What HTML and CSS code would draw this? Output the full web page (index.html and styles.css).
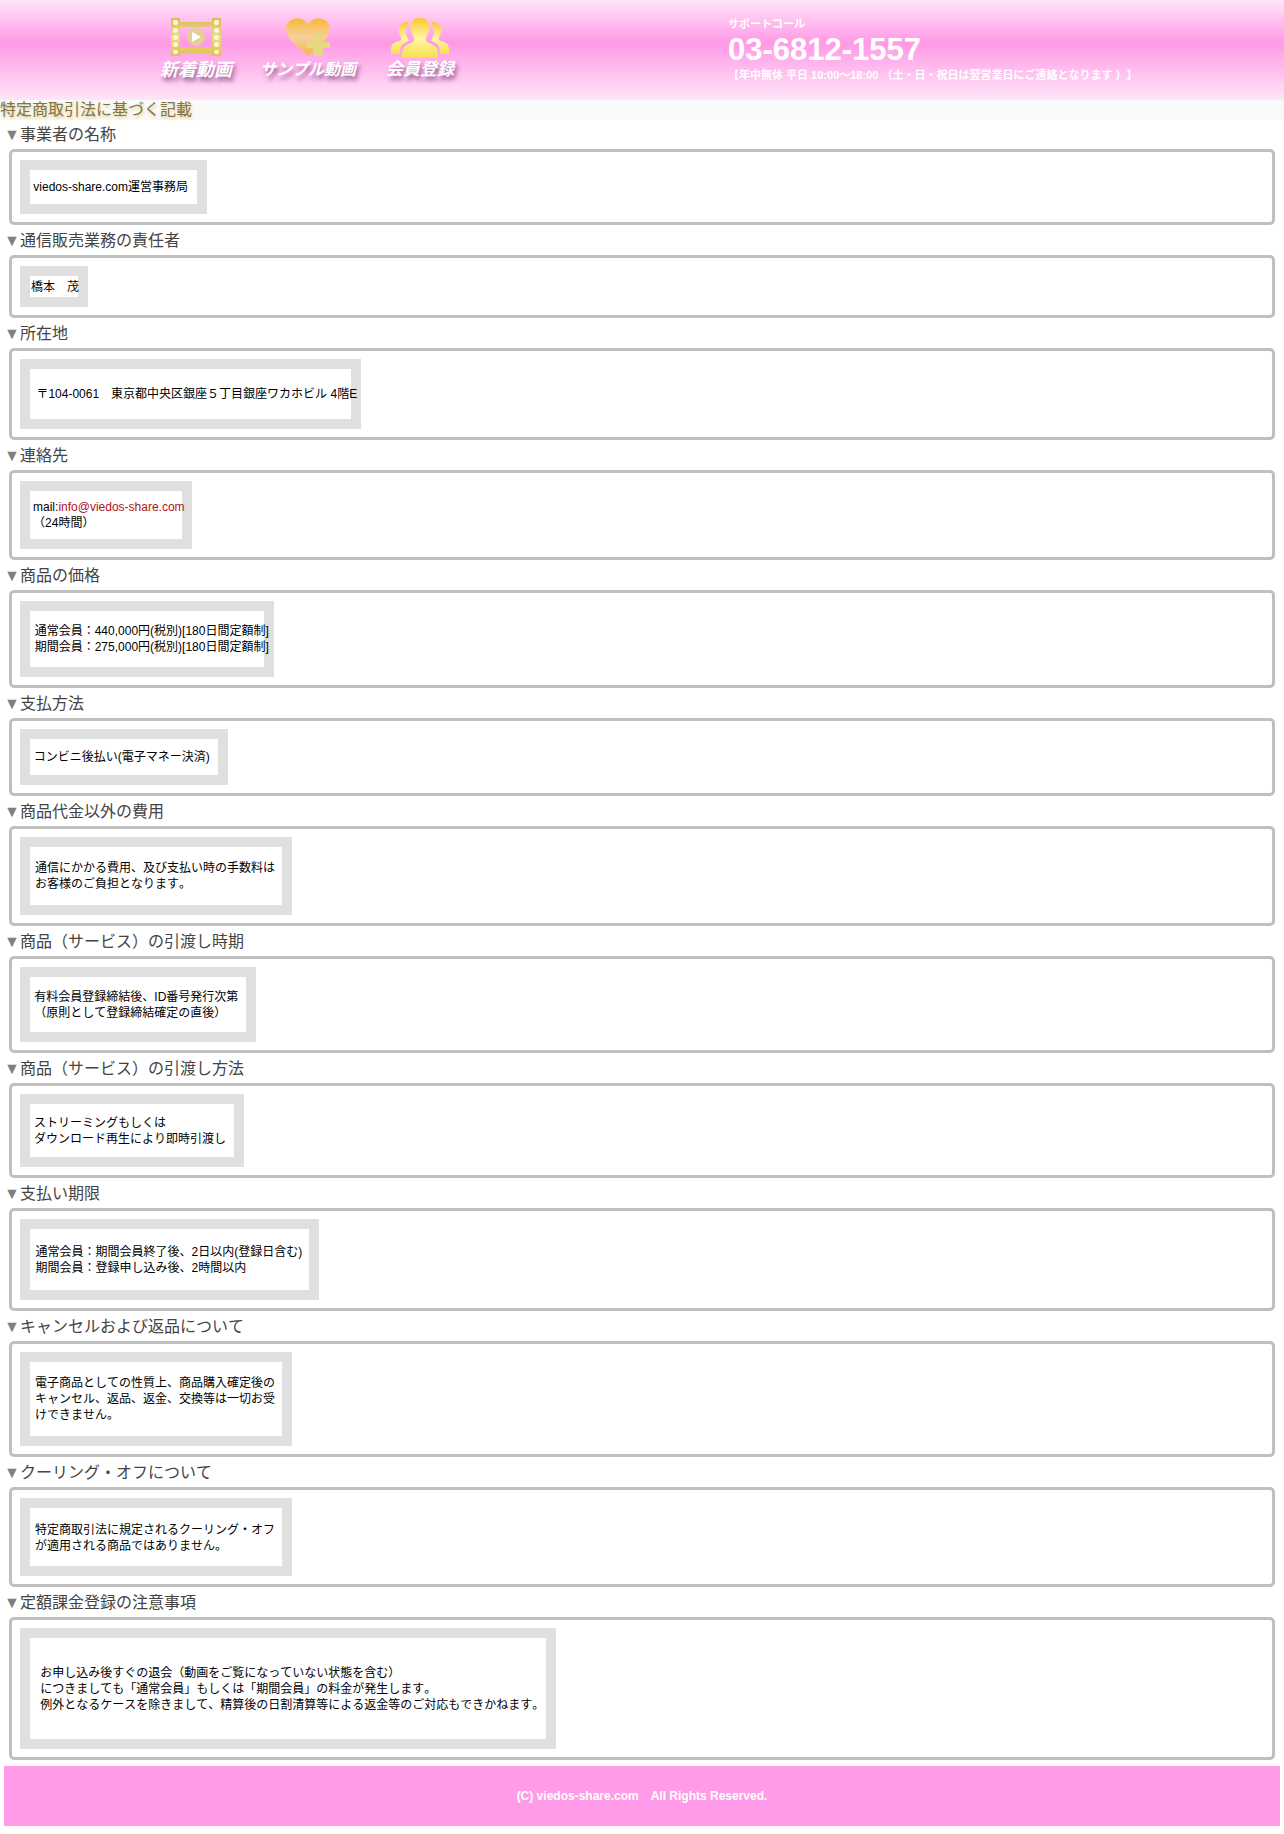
FILE: index.html
```
<!DOCTYPE html>
<html lang="ja">
<head>
  <meta charset="UTF-8">
  <meta name="viewport" content="width=device-width, initial-scale=1.0">
  <title>特定商取引法に基づく記載</title>
  <link rel="stylesheet" href="styles.css">
</head>
<body>
  <header class="header">
    <div class="header-inner">
      <nav class="nav">
        <a href="#" class="nav-new">
          <svg width="50" height="40" viewBox="0 0 50 40">
            <defs>
              <linearGradient id="film" x1="0" y1="0" x2="0" y2="1">
                <stop offset="0" stop-color="#ddb95c"/>
                <stop offset="0.5" stop-color="#eadb8c"/>
                <stop offset="1" stop-color="#e2bf4e"/>
              </linearGradient>
            </defs>
            <path fill="url(#film)" fill-rule="evenodd" d="M0 0h9v4h32V0h9v38h-9v-3H9v3H0zM9 9v21h32V9z"/>
            <g fill="#fff6cf">
              <rect x="2" y="2" width="5" height="5" rx="2"/>
              <rect x="2" y="10" width="5" height="5" rx="2"/>
              <rect x="2" y="17" width="5" height="5" rx="2"/>
              <rect x="2" y="24" width="5" height="5" rx="2"/>
              <rect x="2" y="32" width="5" height="4" rx="2"/>
              <rect x="43" y="2" width="5" height="5" rx="2"/>
              <rect x="43" y="10" width="5" height="5" rx="2"/>
              <rect x="43" y="17" width="5" height="5" rx="2"/>
              <rect x="43" y="24" width="5" height="5" rx="2"/>
              <rect x="43" y="32" width="5" height="4" rx="2"/>
            </g>
            <circle cx="25" cy="19" r="9" fill="#e5cf96"/>
            <path fill="#fff" d="M21 14l9 5-9 5z"/>
          </svg>
          <span>新着動画</span>
        </a>
        <a href="#" class="nav-sample">
          <svg width="44" height="40" viewBox="0 0 44 40">
            <defs>
              <linearGradient id="heart" x1="0" y1="0" x2="0" y2="1">
                <stop offset="0" stop-color="#f9b934"/>
                <stop offset="0.5" stop-color="#f5cfa0"/>
                <stop offset="1" stop-color="#f4b83c"/>
              </linearGradient>
            </defs>
            <path fill="url(#heart)" d="M22 38C17 31 0 23 0 11 0 0 15-4 22 6 29-4 44 0 44 11c0 12-17 20-22 27z"/>
            <path fill="#e8d781" d="M28 24a5 5 0 1 1 8 0h8v6h-7v8h-9v-8h-7v-6z"/>
          </svg>
          <span>サンプル動画</span>
        </a>
        <a href="#" class="nav-join">
          <svg width="58" height="40" viewBox="0 0 58 40">
            <defs>
              <linearGradient id="people" x1="0" y1="0" x2="0" y2="1">
                <stop offset="0" stop-color="#f7c82c"/>
                <stop offset="0.5" stop-color="#fff5a6"/>
                <stop offset="1" stop-color="#f8df4c"/>
              </linearGradient>
            </defs>
            <g fill="url(#people)">
              <path d="M18 4C10 3 7 9 8 15c1 3 3 4 2 7-4 2-8 2-9 5-1 3-1 6-1 9h9c0-8 1-10 9-13-1-3-3-5-3-10 0-4 1-6 3-9z"/>
              <path d="M40 4c8-1 11 5 10 11-1 3-3 4-2 7 4 2 8 2 9 5 1 3 1 6 1 9h-9c0-8-1-10-9-13 1-3 3-5 3-10 0-4-1-6-3-9z"/>
              <path d="M29 0c-8 0-11 6-9 12 1 4 3 7 3 10-1 3-4 3-7 5-5 2-5 7-5 13h36c0-6 0-11-5-13-3-2-6-2-7-5 0-3 2-6 3-10 2-6-1-12-9-12z"/>
            </g>
          </svg>
          <span>会員登録</span>
        </a>
      </nav>
      <div class="support">
        <p>サポートコール</p>
        <p class="tel">03-6812-1557</p>
        <p>【年中無休 平日 10:00～18:00 （土・日・祝日は翌営業日にご連絡となります ）】</p>
      </div>
    </div>
  </header>

  <h1 class="title">特定商取引法に基づく記載</h1>

  <main>
    <h2>事業者の名称</h2>
    <div class="box"><div class="inner">
      <p>viedos-share.com運営事務局　</p>
    </div></div>

    <h2>通信販売業務の責任者</h2>
    <div class="box"><div class="inner">
      <p>橋本　茂</p>
    </div></div>

    <h2>所在地</h2>
    <div class="box"><div class="inner">
      <p>〒104-0061　東京都中央区銀座５丁目銀座ワカホビル 4階E</p>
    </div></div>

    <h2>連絡先</h2>
    <div class="box"><div class="inner">
      <p>mail:<a href="mailto:info@viedos-share.com">info@viedos-share.com</a><br>
      （24時間）</p>
    </div></div>

    <h2>商品の価格</h2>
    <div class="box"><div class="inner">
      <p>通常会員：440,000円(税別)[180日間定額制]<br>
      期間会員：275,000円(税別)[180日間定額制]</p>
    </div></div>

    <h2>支払方法</h2>
    <div class="box"><div class="inner">
      <p>コンビニ後払い(電子マネー決済)　</p>
    </div></div>

    <h2>商品代金以外の費用</h2>
    <div class="box"><div class="inner">
      <p>通信にかかる費用、及び支払い時の手数料は　<br>
      お客様のご負担となります。</p>
    </div></div>

    <h2>商品（サービス）の引渡し時期</h2>
    <div class="box"><div class="inner">
      <p>有料会員登録締結後、ID番号発行次第　<br>
      （原則として登録締結確定の直後）</p>
    </div></div>

    <h2>商品（サービス）の引渡し方法</h2>
    <div class="box"><div class="inner">
      <p>ストリーミングもしくは<br>
      ダウンロード再生により即時引渡し　</p>
    </div></div>

    <h2>支払い期限</h2>
    <div class="box"><div class="inner">
      <p>通常会員：期間会員終了後、2日以内(登録日含む)　<br>
      期間会員：登録申し込み後、2時間以内</p>
    </div></div>

    <h2>キャンセルおよび返品について</h2>
    <div class="box"><div class="inner">
      <p>電子商品としての性質上、商品購入確定後の　<br>
      キャンセル、返品、返金、交換等は一切お受<br>
      けできません。</p>
    </div></div>

    <h2>クーリング・オフについて</h2>
    <div class="box"><div class="inner">
      <p>特定商取引法に規定されるクーリング・オフ　<br>
      が適用される商品ではありません。</p>
    </div></div>

    <h2>定額課金登録の注意事項</h2>
    <div class="box"><div class="inner">
      <p>お申し込み後すぐの退会（動画をご覧になっていない状態を含む）<br>
      につきましても「通常会員」もしくは「期間会員」の料金が発生します。<br>
      例外となるケースを除きまして、精算後の日割清算等による返金等のご対応もできかねます。　</p>
    </div></div>
  </main>

  <footer class="footer">(C) viedos-share.com　All Rights Reserved.</footer>
</body>
</html>
```
FILE: styles.css
```
* {
  margin: 0;
  padding: 0;
  box-sizing: border-box;
}

body {
  font-family: "Liberation Sans", "Noto Sans CJK JP", sans-serif;
  font-size: 12px;
  font-kerning: none;
  text-spacing-trim: space-all;
  line-height: 16px;
  color: #000;
  background-color: #fff;
}

a {
  color: #b11217;
  text-decoration: none;
}

.header {
  height: 100px;
  background: linear-gradient(#fee6f8, #ff99e6 43%, #fee6f8);
}

.header-inner {
  display: flex;
  justify-content: space-between;
  max-width: 1004px;
  margin: 0 auto;
  padding-top: 16px;
}

.nav {
  display: flex;
}

.nav a {
  display: flex;
  flex-direction: column;
  align-items: center;
  width: 112px;
  padding-top: 2px;
  line-height: 24px;
  font-weight: bold;
  white-space: nowrap;
  color: #fff;
  text-shadow: 2px 4px 4px rgba(90, 30, 90, 0.6);
}

.nav-new {
  font-size: 18px;
  font-style: italic;
}

.nav-sample {
  font-size: 16px;
  font-style: italic;
}

.nav-join {
  font-size: 17px;
  font-style: italic;
}

.support {
  width: 416px;
  font-size: 11px;
  font-weight: bold;
  color: #fff;
  white-space: nowrap;
}

.support .tel {
  font-size: 31px;
  line-height: 35px;
}

.title {
  font-size: 16px;
  font-weight: normal;
  line-height: 20px;
  color: #80734f;
  background-color: #f9f9f9;
  text-shadow: 1px 2px 3px #e6cf7a;
}

h2 {
  display: flex;
  padding-left: 4px;
  font-size: 16px;
  font-weight: normal;
  line-height: 29px;
  color: #444;
}

h2::before {
  content: "▼";
  width: 16px;
  color: #808080;
  text-align: center;
}

.box {
  margin: 0 9px 1px;
  padding: 8px;
  border: 3px solid #bfbfbf;
  border-radius: 5px;
}

.inner {
  width: fit-content;
  padding-top: 1px;
  border: 10px solid #dfdfdf;
}

.inner p {
  padding: 5% 2%;
  white-space: nowrap;
}

.footer {
  margin: 6px 4px 8px;
  padding: 22px 0;
  font-weight: bold;
  text-align: center;
  color: #fff;
  background-color: #ff9be8;
}
```
